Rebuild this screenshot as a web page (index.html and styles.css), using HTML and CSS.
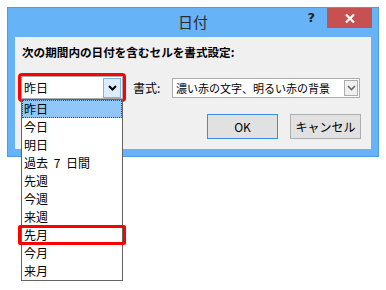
FILE: index.html
```html
<!DOCTYPE html>
<html lang="ja">
<head>
<meta charset="utf-8">
<link rel="stylesheet" href="styles.css">
</head>
<body>
<div class="window">
  <div class="titlebar">
    <span></span>
    <span class="title">日付</span>
    <div class="controls">
      <span class="help">?</span>
      <span class="close">
        <svg width="10" height="9" viewBox="0 0 10 9"><path d="M1 0.5 L9 8.5 M9 0.5 L1 8.5" stroke="#fff" stroke-width="2.2"/></svg>
      </span>
    </div>
  </div>
  <div class="content">
    <div class="prompt">次の期間内の日付を含むセルを書式設定:</div>
    <div class="row">
      <div class="combo period marked">
        <span class="combo-text">昨日</span>
        <span class="combo-btn active">
          <svg width="9" height="6" viewBox="0 0 9 6"><path d="M1 1 L4.5 4.5 L8 1" fill="none" stroke="#000" stroke-width="2"/></svg>
        </span>
      </div>
      <span class="label">書式:</span>
      <div class="combo format">
        <span class="combo-text">濃い赤の文字、明るい赤の背景</span>
        <span class="combo-btn">
          <svg width="9" height="6" viewBox="0 0 9 6"><path d="M1 1 L4.5 4.5 L8 1" fill="none" stroke="#666" stroke-width="1.6"/></svg>
        </span>
      </div>
    </div>
    <div class="buttons">
      <button class="btn default">OK</button>
      <button class="btn">キャンセル</button>
    </div>
  </div>
  <ul class="dropdown">
    <li class="selected">昨日</li>
    <li>今日</li>
    <li>明日</li>
    <li class="spaced">過去 7 日間</li>
    <li>先週</li>
    <li>今週</li>
    <li>来週</li>
    <li class="marked-item">先月</li>
    <li>今月</li>
    <li>来月</li>
  </ul>
</div>
</body>
</html>
```

FILE: styles.css
```css
* { box-sizing: border-box; }
html, body { margin: 0; background: #ffffff; }
html { height: 100%; }
body {
  min-height: 290px;
  height: 100%;
  padding: 7px;
  font-family: "Noto Sans CJK JP", "Noto Sans", sans-serif;
  font-size: 12px;
  color: #000;
}
.window {
  position: relative;
  width: 372px;
  height: 150px;
  border: 1px solid #4d9be6;
  background: #66b3f7;
  padding: 0 7px 7px 7px;
  display: flex;
  flex-direction: column;
}
.titlebar {
  height: 29px;
  display: grid;
  grid-template-columns: 1fr auto 1fr;
  align-items: start;
}
.title {
  font-size: 15px;
  line-height: 28px;
  color: #2b2b2b;
}
.controls {
  display: flex;
  justify-content: flex-end;
  align-items: flex-start;
  margin-right: -1px;
}
.help {
  font-family: "DejaVu Sans", sans-serif;
  font-weight: bold;
  font-size: 13px;
  line-height: 18px;
  color: #222;
  margin-right: 12px;
  margin-top: 1px;
}
.close {
  width: 45px;
  height: 20px;
  background: #c75050;
  display: flex;
  align-items: center;
  justify-content: center;
}
.content {
  flex: 1;
  background: #f0f0f0;
  padding: 8px 10px 0 6px;
  display: flex;
  flex-direction: column;
}
.prompt {
  font-weight: bold;
  font-size: 11.6px;
  line-height: 14px;
  margin-left: 1px;
}
.row {
  display: flex;
  align-items: center;
  margin-top: 17px;
}
.combo {
  display: flex;
  align-items: center;
  background: #fff;
  border: 1px solid #acacac;
}
.combo-text {
  flex: 1;
  white-space: nowrap;
}
.period {
  width: 102px;
  height: 23px;
  padding: 0 1px 0 2px;
}
.marked {
  outline: 3px solid #ff0000;
  border-radius: 1px;
}
.combo-btn {
  flex: none;
  display: flex;
  align-items: center;
  justify-content: center;
  border: 1px solid #acacac;
  background: #f0f0f0;
}
.period .combo-btn {
  width: 18px;
  height: 20px;
}
.combo-btn.active {
  background: #dcecfc;
  border-color: #7eb4ea;
}
.label {
  margin-left: 10px;
  width: 39px;
}
.format {
  width: 188px;
  height: 20px;
  padding: 0 1px 0 3px;
}
.format .combo-text {
  font-size: 11px;
}
.format .combo-btn {
  width: 14px;
  height: 16px;
}
.buttons {
  display: flex;
  justify-content: flex-end;
  gap: 12px;
  margin-top: 15px;
}
.btn {
  width: 71px;
  height: 25px;
  font-family: "Noto Sans CJK JP", "Noto Sans", sans-serif;
  font-size: 12px;
  background: #e1e1e1;
  border: 1px solid #adadad;
  color: #000;
  padding: 0;
}
.btn.default {
  border-color: #3c8ce6;
}
.dropdown {
  position: absolute;
  z-index: 2;
  left: 13px;
  top: 91px;
  width: 102px;
  margin: 0;
  padding: 0;
  list-style: none;
  background: #fff;
  border: 1px solid #646464;
}
.dropdown li {
  height: 18px;
  line-height: 18px;
  padding-left: 2px;
  position: relative;
}
.dropdown li.spaced {
  word-spacing: 3px;
}
.dropdown li.selected {
  background: #91c6f8;
  outline: 1px dotted #5a4a2a;
  outline-offset: -1px;
}
.dropdown li.marked-item::after {
  content: "";
  position: absolute;
  left: -4px;
  right: -4px;
  top: -1px;
  bottom: -1px;
  border: 3px solid #ff0000;
  border-radius: 2px;
}
```
